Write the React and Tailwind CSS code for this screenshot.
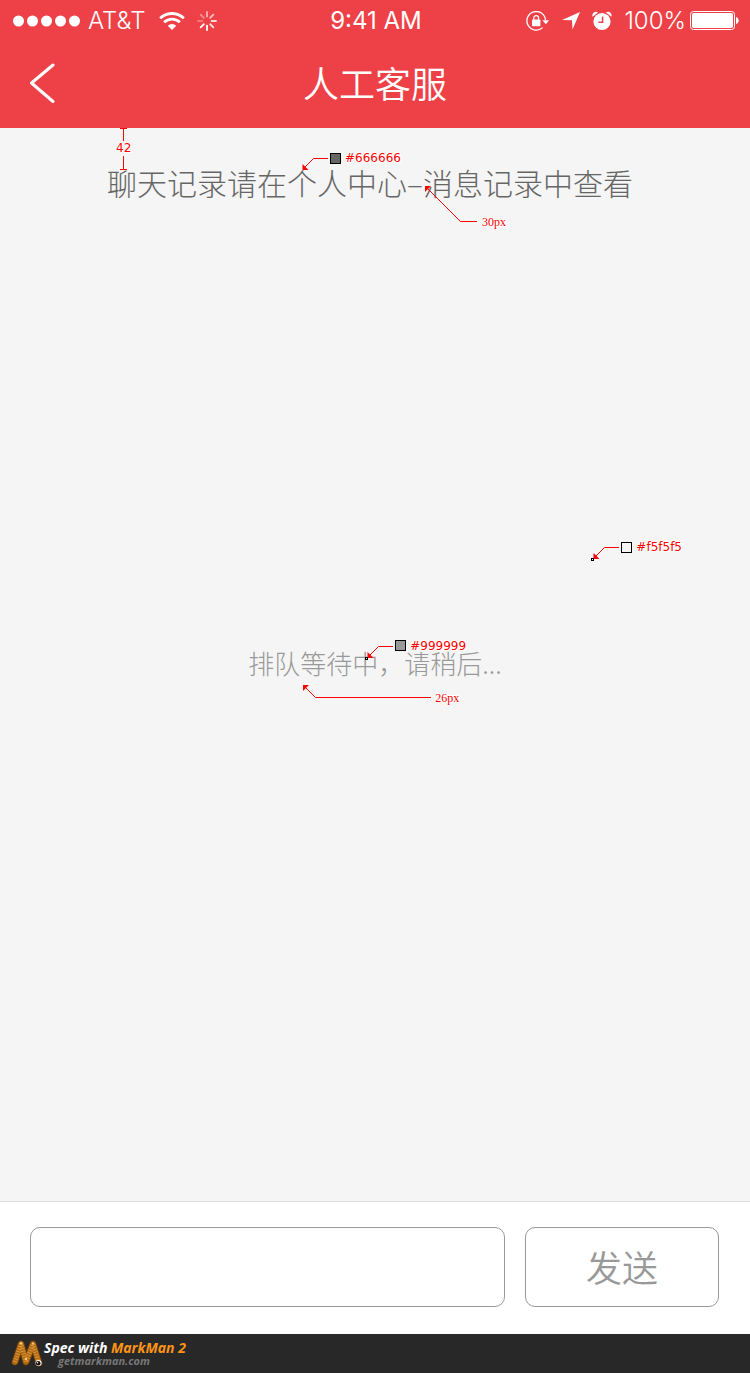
import React from "react";

const CJK = "font-['Noto_Sans_CJK_SC',sans-serif]";
const HALO =
  "[text-shadow:1px_0_#fff,-1px_0_#fff,0_1px_#fff,0_-1px_#fff,1px_1px_#fff,-1px_-1px_#fff]";

function SignalDots() {
  return (
    <svg width="67" height="12" viewBox="0 0 67 12" fill="currentColor" aria-hidden="true">
      {[5.5, 19.5, 33.5, 47.5, 61.5].map((x) => (
        <circle key={x} cx={x} cy="6" r="5.5" />
      ))}
    </svg>
  );
}

function WifiIcon() {
  return (
    <svg width="26" height="18" viewBox="0 0 26 18" fill="none" stroke="currentColor" strokeWidth="2.9" aria-hidden="true">
      <path d="M1.2 6.2a17 17 0 0 1 23.6 0" />
      <path d="M5.1 10.3a11.3 11.3 0 0 1 15.8 0" />
      <path d="M13 18l-4.2-4.3a6 6 0 0 1 8.4 0z" fill="currentColor" stroke="none" />
    </svg>
  );
}

function SpinnerIcon() {
  const spokes = [0.6, 0.65, 0.8, 0.85, 1, 1, 0.3, 0.4];
  return (
    <svg width="20" height="20" viewBox="0 0 20 20" stroke="currentColor" strokeWidth="1.8" strokeLinecap="round" aria-hidden="true">
      {spokes.map((opacity, i) => (
        <path key={i} d="M10 1v4.4" opacity={opacity} transform={`rotate(${i * 45} 10 10)`} />
      ))}
    </svg>
  );
}

function RotationLockIcon() {
  return (
    <svg width="24" height="20" viewBox="0 0 24 20" fill="none" stroke="currentColor" aria-hidden="true">
      <path d="M19.5 9A9.3 9.3 0 1 0 16.6 16.6" strokeWidth="1.3" />
      <path d="M16.4 9.2h6.8l-3.4 4z" fill="currentColor" stroke="none" />
      <rect x="6" y="8.5" width="8.4" height="6.7" rx="0.8" fill="currentColor" stroke="none" />
      <path d="M7.8 9V7a2.4 2.4 0 0 1 4.8 0v2" strokeWidth="1.3" />
    </svg>
  );
}

function LocationIcon() {
  return (
    <svg width="18" height="18" viewBox="0 0 18 18" fill="currentColor" aria-hidden="true">
      <path d="M18 0L10.5 17.5L10 8.3L0 8z" />
    </svg>
  );
}

function AlarmIcon() {
  return (
    <svg width="20" height="20" viewBox="0 0 20 20" fill="currentColor" aria-hidden="true">
      <circle cx="10" cy="10.5" r="8.6" />
      <path d="M0.6 5.8C-0.6 2.6 3-0.4 6 1.4zM19.4 5.8C20.6 2.6 17-0.4 14 1.4z" />
      <path d="M10.6 5.4v5.8H6.4" fill="none" stroke="#ee4147" strokeWidth="1.5" />
    </svg>
  );
}

function BatteryIcon() {
  return (
    <svg width="49" height="19" viewBox="0 0 49 19" aria-hidden="true">
      <rect x="0.5" y="0.5" width="44" height="18" rx="3" fill="none" stroke="currentColor" />
      <rect x="2" y="2" width="41" height="15" rx="1.8" fill="currentColor" />
      <path d="M46 6c3.6 1 3.6 6 0 7z" fill="currentColor" />
    </svg>
  );
}

function StatusBar() {
  return (
    <div className="grid h-10 grid-cols-[1fr_auto_1fr] items-center pl-[13px] pr-[11px] pt-px font-['Inter',sans-serif] text-2xl">
      <div className="flex items-center">
        <SignalDots />
        <span className="ml-2 mr-3.5 font-light">AT&amp;T</span>
        <WifiIcon />
        <span className="ml-3 flex">
          <SpinnerIcon />
        </span>
      </div>
      <time>9:41 AM</time>
      <div className="flex items-center justify-end">
        <RotationLockIcon />
        <span className="ml-3 mr-3 flex">
          <LocationIcon />
        </span>
        <AlarmIcon />
        <span className="ml-3 mr-1 font-light">100%</span>
        <BatteryIcon />
      </div>
    </div>
  );
}

function Header() {
  return (
    <header className="bg-[#ee4147] text-white">
      <StatusBar />
      <div className="grid h-[88px] grid-cols-[1fr_auto_1fr] items-center px-7">
        <button type="button" aria-label="返回" className="flex w-7">
          <svg width="28" height="42" viewBox="0 0 28 42" fill="none" stroke="currentColor" strokeWidth="3" strokeLinecap="round" strokeLinejoin="round" aria-hidden="true">
            <path d="M25 2L3.5 20L25 38.5" />
          </svg>
        </button>
        <h1 className={`${CJK} pb-1 text-4xl font-[350]`}>人工客服</h1>
      </div>
    </header>
  );
}

function ColorNote({ className, swatch, marker = false, children }) {
  return (
    <span className={`absolute flex items-center gap-1 ${className}`}>
      <svg width="28" height="14" viewBox="0 0 28 14" className="mt-3 overflow-visible" fill="none" stroke="#f00" aria-hidden="true">
        <path d="M26 1.5H11.5L2 11" />
        <path d="M0.5 7v6h6z" fill="#f00" stroke="none" />
        {marker && <rect x="-1.5" y="12.5" width="2" height="2" stroke="#000" />}
      </svg>
      <span className={`-ml-1 block size-[11px] border border-black ${swatch}`} />
      <span className={`font-['DejaVu_Sans',sans-serif] text-xs font-normal leading-4 text-[#f00] ${HALO}`}>{children}</span>
    </span>
  );
}

function SizeNote({ className, children }) {
  return (
    <span className={`absolute font-['Liberation_Serif',serif] text-xs font-normal leading-4 text-[#f00] ${HALO} ${className}`}>
      {children}
    </span>
  );
}

function HistoryNotice() {
  return (
    <p className={`${CJK} relative mr-2.5 mt-8 whitespace-nowrap text-[30px] font-light leading-[44px] text-[#666]`}>
      聊天记录请在个人中心–消息记录中查看
      <span className="absolute -top-8 left-[9px] flex flex-col items-center font-['DejaVu_Sans',sans-serif] text-xs font-normal leading-[14px] text-[#f00]">
        <svg width="7" height="13" viewBox="0 0 7 13" stroke="#f00" aria-hidden="true">
          <path d="M0 .5h7M3.5 0v13" />
        </svg>
        <span className={HALO}>42</span>
        <svg width="7" height="15" viewBox="0 0 7 15" stroke="#f00" aria-hidden="true">
          <path d="M0 14.5h7M3.5 1v14" />
        </svg>
      </span>
      <ColorNote className="-top-[15px] left-[195px]" swatch="bg-[#666]">#666666</ColorNote>
      <svg className="absolute left-[318px] top-[26px]" width="53" height="36" viewBox="0 0 53 36" fill="none" stroke="#f00" aria-hidden="true">
        <path d="M2 2L35.5 35.5H52" />
        <path d="M0 0h6l-6 6z" fill="#f00" stroke="none" />
      </svg>
      <SizeNote className="left-[375px] top-[54px]">30px</SizeNote>
    </p>
  );
}

function QueueNotice() {
  return (
    <p className={`${CJK} relative whitespace-nowrap text-[26px] font-light leading-10 text-[#999]`}>
      排队等待中，请稍后...
      <ColorNote className="-top-[10px] left-[119px]" swatch="bg-[#999]" marker>#999999</ColorNote>
      <svg className="absolute left-[55px] top-[42px]" width="129" height="14" viewBox="0 0 129 14" fill="none" stroke="#f00" aria-hidden="true">
        <path d="M2 2l10.5 10.5H128" />
        <path d="M0 0h6l-6 6z" fill="#f00" stroke="none" />
      </svg>
      <SizeNote className="left-[187px] top-[47px]">26px</SizeNote>
    </p>
  );
}

function Composer() {
  return (
    <form
      onSubmit={(e) => e.preventDefault()}
      className="flex gap-5 border-t border-[#ddd] bg-white pb-[27px] pl-[30px] pr-[31px] pt-[25px]"
    >
      <input
        type="text"
        aria-label="消息"
        className={`${CJK} h-20 min-w-0 flex-1 rounded-[10px] border border-[#999] bg-white px-5 text-3xl text-[#666] outline-none`}
      />
      <button
        type="submit"
        className={`${CJK} h-20 w-[194px] rounded-[10px] border border-[#999] pb-0.5 text-4xl font-[350] text-[#999]`}
      >
        发送
      </button>
    </form>
  );
}

function MarkManLogo() {
  return (
    <svg width="33" height="28" viewBox="0 0 33 28" fill="none" strokeLinecap="round" strokeLinejoin="round" aria-hidden="true">
      <path d="M4 22L10 4L15 22L22 4L28 23" stroke="#6e3d08" strokeWidth="7" />
      <path d="M4 22L10 4L15 22L22 4L28 23" stroke="#b06a14" strokeWidth="5.4" />
      <path d="M4 22L10 4L15 22L22 4L28 23" stroke="#d8943a" strokeWidth="4.5" strokeLinecap="butt" strokeDasharray="1 1.6" />
      <circle cx="10" cy="3.5" r="1" fill="#ffe0a0" />
      <circle cx="22" cy="3.5" r="1" fill="#ffe0a0" />
      <circle cx="15" cy="19" r="1" fill="#ffe0a0" />
      <circle cx="27.5" cy="23" r="3" fill="#fff" />
      <circle cx="27.2" cy="23.3" r="2.3" fill="#111" />
      <circle cx="26.6" cy="22.7" r="0.7" fill="#fff" />
    </svg>
  );
}

function Branding() {
  return (
    <footer className="flex h-[39px] items-center bg-[#282828] pl-[11px] font-['Open_Sans',sans-serif] font-bold italic">
      <MarkManLogo />
      <div className="flex flex-col">
        <span className="text-sm leading-[14px] text-white">
          Spec with <span className="text-[#ff9414]">MarkMan 2</span>
        </span>
        <span className="pl-3.5 text-[11px] leading-3 text-[#777]">getmarkman.com</span>
      </div>
    </footer>
  );
}

export default function App() {
  return (
    <div className="flex min-h-screen flex-col overflow-x-hidden bg-[#f5f5f5]">
      <Header />
      <main className="relative grid flex-1 grid-rows-[1fr_auto_1fr] justify-items-center pb-1">
        <div>
          <HistoryNotice />
        </div>
        <QueueNotice />
        <ColorNote className="right-[68px] top-[406px]" swatch="bg-[#f5f5f5]" marker>#f5f5f5</ColorNote>
      </main>
      <Composer />
      <Branding />
    </div>
  );
}
